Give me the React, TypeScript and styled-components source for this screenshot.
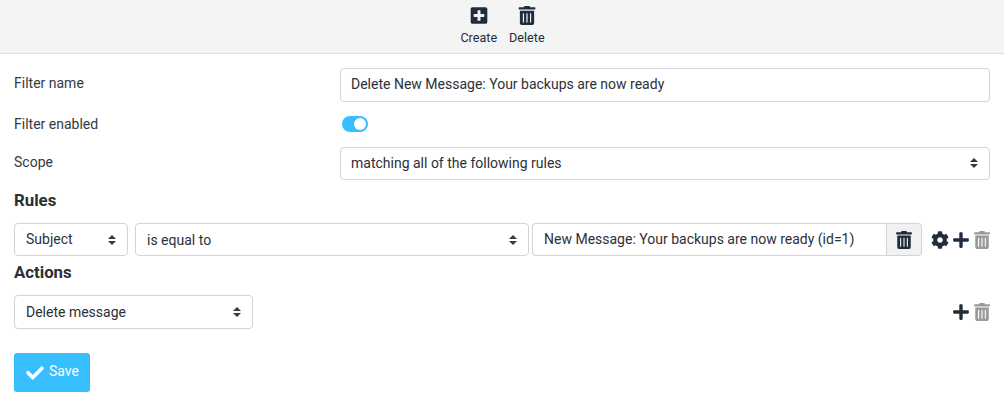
import React from "react";
import styled, { createGlobalStyle } from "styled-components";
import { FaPlusSquare, FaTrashAlt, FaCog, FaPlus, FaCheck } from "react-icons/fa";

const Global = createGlobalStyle`
  html, body { margin: 0; padding: 0; background: #fff; }
  body { font-family: Roboto, "Liberation Sans", sans-serif; font-size: 14px; color: #2c3038; }
`;

const Page = styled.div`
  width: 1004px;
  height: 404px;
  overflow: hidden;
`;

const Toolbar = styled.div`
  height: 53px;
  background: #f4f4f4;
  border-bottom: 1px solid #dcdcdc;
  display: flex;
  justify-content: center;
  gap: 12px;
  padding-left: 1px;
`;

const ToolButton = styled.div`
  display: flex;
  flex-direction: column;
  align-items: center;
  font-size: 12.6px;
  color: #212d3d;
  padding-top: 6px;
  gap: 6px;
  line-height: 14px;
  svg { width: 18px; height: 19px; color: #212d3d; }
`;

const Form = styled.div`
  padding: 14px 14px 0 14px;
  display: flex;
  flex-direction: column;
`;

const Row = styled.div<{ $h: number; $mb: number }>`
  display: grid;
  grid-template-columns: 326px 650px;
  align-items: center;
  height: ${(p) => p.$h}px;
  margin-bottom: ${(p) => p.$mb}px;
`;

const Label = styled.div<{ $pb?: number; $pt?: number }>`
  color: #343a40;
  padding-bottom: ${(p) => p.$pb ?? 0}px;
  padding-top: ${(p) => p.$pt ?? 0}px;
`;

const Input = styled.input`
  height: 34px;
  box-sizing: border-box;
  border: 1px solid #ced4da;
  border-radius: 4px;
  padding: 0 10px 2px;
  font: 14px Roboto, sans-serif;
  color: #2c3038;
  outline: none;
  width: 100%;
  background: #fff;
`;

const Toggle = styled.div`
  width: 26px;
  height: 16px;
  margin-left: 2px;
  border-radius: 8px;
  background: #37beff;
  display: flex;
  align-items: center;
  justify-content: flex-end;
  padding-right: 2px;
  box-sizing: border-box;
`;

const Knob = styled.div`
  width: 12px;
  height: 12px;
  border-radius: 50%;
  background: #fff;
`;

const SelectBox = styled.div<{ $w?: number; $h?: number; $left?: number; $pad?: number }>`
  width: ${(p) => (p.$w ? `${p.$w}px` : "100%")};
  height: ${(p) => p.$h ?? 33}px;
  margin-left: ${(p) => p.$left ?? 0}px;
  box-sizing: border-box;
  flex: none;
  border: 1px solid #ced4da;
  border-radius: 4px;
  padding: 0 11px 0 ${(p) => p.$pad ?? 11}px;
  display: flex;
  align-items: center;
  justify-content: space-between;
  background: #fff;
  color: #2c3038;
`;

const Lifted = styled.span<{ $lift: number }>`
  display: inline-flex;
  padding-bottom: ${(p) => p.$lift}px;
`;

const Caret = () => (
  <svg width="8" height="10" viewBox="0 0 8 10" fill="#343a40">
    <path d="M4 0 L8 4 H0 Z M4 10 L0 6 H8 Z" />
  </svg>
);

const Heading = styled.div<{ $top?: number }>`
  font-size: 16.8px;
  font-weight: 700;
  line-height: 20px;
  color: #2b2f33;
  margin-top: ${(p) => p.$top ?? 0}px;
`;

const Controls = styled.div<{ $top: number }>`
  display: flex;
  align-items: center;
  margin-top: ${(p) => p.$top}px;
`;

const InputGroup = styled.div`
  display: flex;
  width: 390px;
  height: 33px;
  margin-left: 3px;
  flex: none;
`;

const GroupInput = styled.div`
  flex: 1;
  border: 1px solid #ced4da;
  border-right: none;
  border-radius: 4px 0 0 4px;
  padding: 0 11px 2px;
  display: flex;
  align-items: center;
  color: #2c3038;
`;

const Addon = styled.div`
  width: 36px;
  box-sizing: border-box;
  border: 1px solid #ced4da;
  border-radius: 0 4px 4px 0;
  background: #eff1f3;
  display: flex;
  align-items: center;
  justify-content: center;
  font-size: 18px;
  color: #212d3d;
`;

const IconSet = styled.div`
  display: flex;
  align-items: center;
  margin-left: auto;
  margin-right: -1px;
  gap: 3px;
`;

const IconSlot = styled.span<{ $muted?: boolean }>`
  display: inline-flex;
  font-size: 18px;
  color: ${(p) => (p.$muted ? "#999a9c" : "#212d3d")};
`;

const SaveButton = styled.button`
  width: 76px;
  height: 39px;
  margin-top: 24px;
  border: none;
  border-radius: 3px;
  background: #37beff;
  color: #fff;
  font: 14px Roboto, sans-serif;
  display: flex;
  align-items: center;
  gap: 5px;
  padding: 0 0 0 12px;
  svg { width: 18px; height: 18px; }
`;

export default function App() {
  return (
    <Page>
      <Global />
      <Toolbar>
        <ToolButton><FaPlusSquare />Create</ToolButton>
        <ToolButton><FaTrashAlt />Delete</ToolButton>
      </Toolbar>
      <Form>
        <Row $h={34} $mb={13}>
          <Label $pb={4}>Filter name</Label>
          <Input readOnly value="Delete New Message: Your backups are now ready" />
        </Row>
        <Row $h={16} $mb={16}>
          <Label $pt={1}>Filter enabled</Label>
          <Toggle><Knob /></Toggle>
        </Row>
        <Row $h={33} $mb={10}>
          <Label $pb={4}>Scope</Label>
          <SelectBox $pad={10}>
            <Lifted $lift={2}>matching all of the following rules</Lifted>
            <Lifted $lift={2}><Caret /></Lifted>
          </SelectBox>
        </Row>
        <Heading>Rules</Heading>
        <Controls $top={13}>
          <SelectBox $w={114}><Lifted $lift={2}>Subject</Lifted><Caret /></SelectBox>
          <SelectBox $w={394} $left={7}>is equal to<Caret /></SelectBox>
          <InputGroup>
            <GroupInput>New Message: Your backups are now ready (id=1)</GroupInput>
            <Addon><FaTrashAlt /></Addon>
          </InputGroup>
          <IconSet>
            <IconSlot><FaCog /></IconSlot>
            <IconSlot><FaPlus /></IconSlot>
            <IconSlot $muted><FaTrashAlt /></IconSlot>
          </IconSet>
        </Controls>
        <Heading $top={6}>Actions</Heading>
        <Controls $top={13}>
          <SelectBox $w={239} $h={34}>Delete message<Caret /></SelectBox>
          <IconSet>
            <IconSlot><FaPlus /></IconSlot>
            <IconSlot $muted><FaTrashAlt /></IconSlot>
          </IconSet>
        </Controls>
        <SaveButton><FaCheck /><Lifted $lift={4}>Save</Lifted></SaveButton>
      </Form>
    </Page>
  );
}
